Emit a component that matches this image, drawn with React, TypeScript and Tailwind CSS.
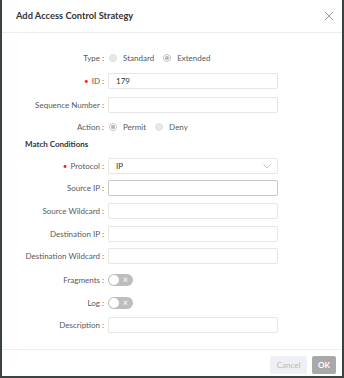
import React from "react";

const font = { fontFamily: "Lato, 'Open Sans', sans-serif" };

function Label({ children, required }: { children: React.ReactNode; required?: boolean }) {
  return (
    <div className="w-[106px] shrink-0 text-right pr-[4px] text-[8px] text-[#595959] leading-none whitespace-nowrap">
      {required && <span className="text-[#f5222d] mr-[3px]">•</span>}
      {children}
      <span className="ml-[2px]">:</span>
    </div>
  );
}

function Input({ value, focus }: { value?: string; focus?: boolean }) {
  return (
    <div
      className={`w-[170px] h-[16px] rounded-[2px] border bg-white flex items-center px-[7px] text-[8px] text-[#333] ${
        focus ? "border-[#c9c9c9]" : "border-[#e6e6e6]"
      }`}
    >
      {value}
    </div>
  );
}

function Row({ label, required, children, mt }: { label: string; required?: boolean; children: React.ReactNode; mt: string }) {
  return (
    <div className={`flex items-center h-[16px] ${mt}`}>
      <Label required={required}>{label}</Label>
      {children}
    </div>
  );
}

function Radio({ checked, label }: { checked?: boolean; label: string }) {
  return (
    <div className="flex items-center ml-[1px] mr-[8px]">
      {checked ? (
        <div className="w-[8px] h-[8px] rounded-full border border-[#c4c4c4] bg-white flex items-center justify-center">
          <div className="w-[4px] h-[4px] rounded-full bg-[#b5b5b5]" />
        </div>
      ) : (
        <div className="w-[8px] h-[8px] rounded-full bg-[#e8e8e8] border border-[#e0e0e0]" />
      )}
      <span className="ml-[6px] text-[8px] text-[#595959] leading-none">{label}</span>
    </div>
  );
}

function Toggle() {
  return (
    <div className="w-[25px] h-[12px] rounded-full bg-[#bdbdbd] relative">
      <div className="absolute left-[1px] top-[1px] w-[10px] h-[10px] rounded-full bg-white" />
      <span className="absolute right-[5px] top-0 text-white text-[9px] leading-[11px]">×</span>
    </div>
  );
}

export default function App() {
  return (
    <div style={font} className="w-[344px] h-[378px] bg-white border-l-2 border-r-2 border-b-2 border-[#3b4441] flex flex-col">
      <div className="h-[33px] shrink-0 border-b border-[#eeeeee] flex items-center justify-between pl-[14px] pr-[8px]">
        <span className="text-[9.3px] font-bold text-[#333] leading-none">Add Access Control Strategy</span>
        <svg width="10" height="10" viewBox="0 0 10 10">
          <path d="M1 1 L9 9 M9 1 L1 9" stroke="#999" strokeWidth="1" />
        </svg>
      </div>
      <div className="flex-1 flex flex-col">
        <Row label="Type" mt="mt-[17px]">
          <Radio label="Standard" />
          <Radio label="Extended" checked />
        </Row>
        <Row label="ID" required mt="mt-[7px]">
          <Input value="179" />
        </Row>
        <Row label="Sequence Number" mt="mt-[8px]">
          <Input />
        </Row>
        <Row label="Action" mt="mt-[6px]">
          <Radio label="Permit" checked />
          <Radio label="Deny" />
        </Row>
        <div className="h-[14px] mt-[2px] flex items-center pl-[23px] text-[8px] font-bold text-[#333] leading-none">
          Match Conditions
        </div>
        <Row label="Protocol" required mt="mt-[7px]">
          <div className="w-[170px] h-[16px] rounded-[2px] border border-[#e6e6e6] bg-white flex items-center justify-between pl-[7px] pr-[6px] text-[8px] text-[#333]">
            <span>IP</span>
            <svg width="8" height="5" viewBox="0 0 8 5">
              <path d="M0.5 0.5 L4 4 L7.5 0.5" stroke="#c0c0c0" fill="none" strokeWidth="0.9" />
            </svg>
          </div>
        </Row>
        <Row label="Source IP" mt="mt-[6px]">
          <Input focus />
        </Row>
        <Row label="Source Wildcard" mt="mt-[7px]">
          <Input />
        </Row>
        <Row label="Destination IP" mt="mt-[7px]">
          <Input />
        </Row>
        <Row label="Destination Wildcard" mt="mt-[6px]">
          <Input />
        </Row>
        <Row label="Fragments" mt="mt-[8px]">
          <Toggle />
        </Row>
        <Row label="Log" mt="mt-[7px]">
          <Toggle />
        </Row>
        <Row label="Description" mt="mt-[6px]">
          <Input />
        </Row>
      </div>
      <div className="h-[27px] shrink-0 border-t border-[#eeeeee] flex items-start justify-end gap-[5px] pt-[6px] pr-[6px]">
        <div className="w-[37px] h-[18px] rounded-[2px] bg-[#eef0f3] text-[#b8b8b8] text-[8px] flex items-center justify-center">
          Cancel
        </div>
        <div className="w-[24px] h-[18px] rounded-[2px] bg-[#a9a9a9] text-white font-bold text-[8px] flex items-center justify-center">
          OK
        </div>
      </div>
    </div>
  );
}
